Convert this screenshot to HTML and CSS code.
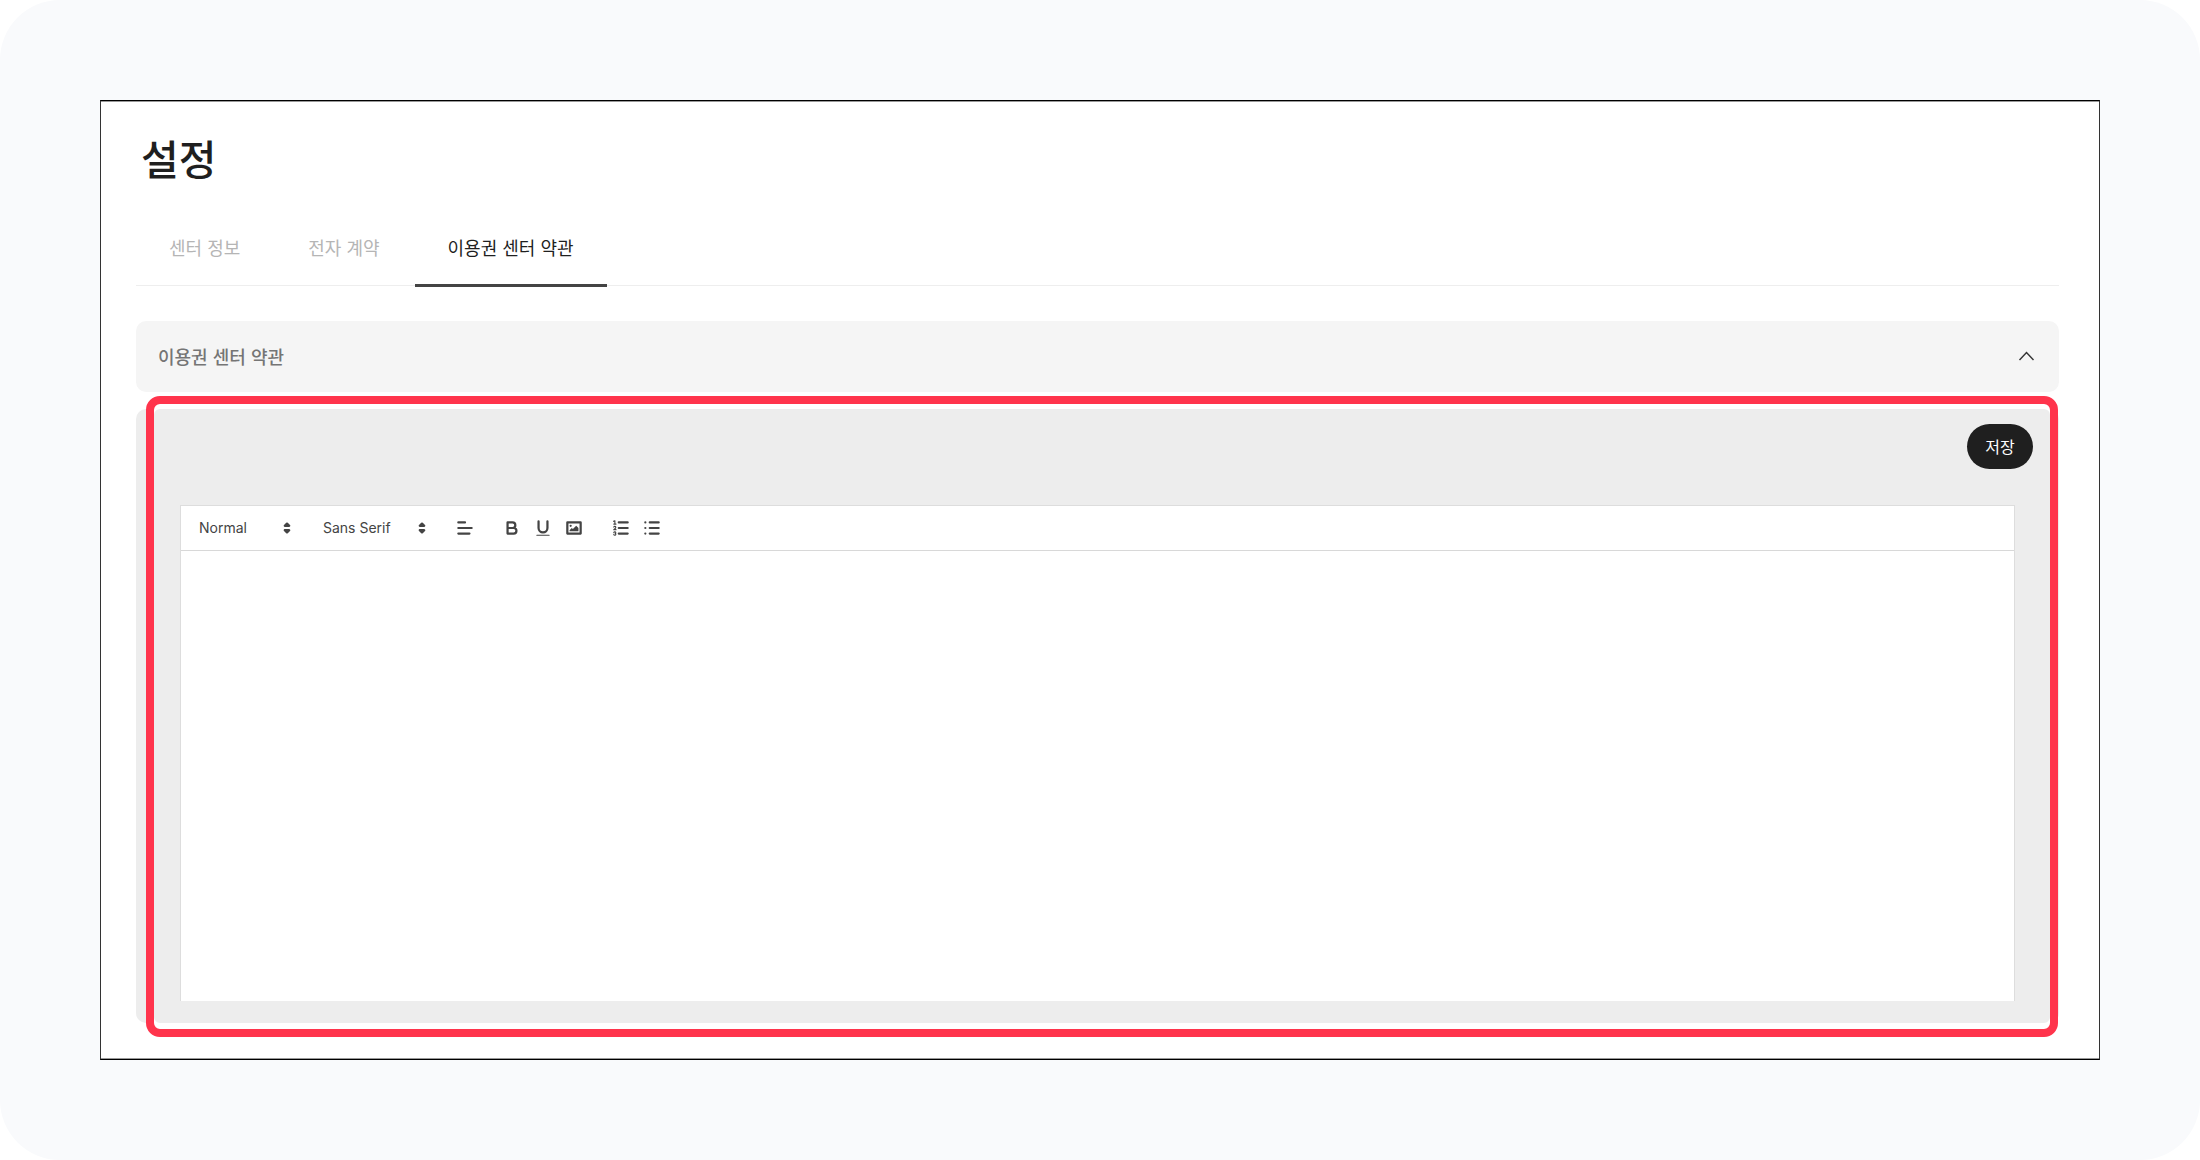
FILE: index.html
```html
<!DOCTYPE html>
<html lang="ko">
<head>
  <meta charset="UTF-8">
  <meta name="viewport" content="width=device-width, initial-scale=1.0">
  <title>설정</title>
  <link rel="stylesheet" href="styles.css">
</head>
<body>
  <div class="stage">
    <main class="window">
      <h1>설정</h1>

      <nav class="tabs">
        <a href="#center" class="tab">센터 정보</a>
        <a href="#contract" class="tab">전자 계약</a>
        <a href="#terms" class="tab active" aria-current="page">이용권 센터 약관</a>
      </nav>

      <button type="button" class="accordion" aria-expanded="true" aria-controls="terms">
        이용권 센터 약관
        <svg class="chevron" viewBox="0 0 16 10"><path d="M1 9L8 1.5L15 9"/></svg>
      </button>

      <section class="panel" id="terms">
        <div class="actions">
          <button type="button" class="save">저장</button>
        </div>

        <div class="editor">
          <div class="toolbar">
            <div class="picker picker-header">
              <select aria-label="Heading">
                <option>Normal</option>
                <option>Heading 1</option>
                <option>Heading 2</option>
              </select>
              <svg class="icon" viewBox="0 0 18 18"><path class="solid" d="M7 11L9 13L11 11ZM7 7L9 5L11 7Z"/></svg>
            </div>
            <div class="picker picker-font">
              <select aria-label="Font">
                <option>Sans Serif</option>
                <option>Serif</option>
                <option>Monospace</option>
              </select>
              <svg class="icon" viewBox="0 0 18 18"><path class="solid" d="M7 11L9 13L11 11ZM7 7L9 5L11 7Z"/></svg>
            </div>
            <div class="group">
              <button type="button" aria-label="Align">
                <svg class="icon" viewBox="0 0 18 18"><path d="M3 9H15M3 14H13M3 4H9"/></svg>
              </button>
            </div>
            <div class="group">
              <button type="button" aria-label="Bold">
                <svg class="icon" viewBox="0 0 18 18"><path d="M5 4H9.5A2.5 2.5 0 0 1 9.5 9H5ZM5 9H10.5A2.5 2.5 0 0 1 10.5 14H5Z"/></svg>
              </button>
              <button type="button" aria-label="Underline">
                <svg class="icon" viewBox="0 0 18 18"><path d="M5 3V9A4 4 0 0 0 13 9V3"/><rect class="fill" x="3" y="15" width="12" height="1" rx="0.5"/></svg>
              </button>
              <button type="button" aria-label="Image">
                <svg class="icon" viewBox="0 0 18 18"><rect x="3" y="4" width="12" height="10"/><circle class="fill" cx="6" cy="7" r="1"/><path class="fill" d="M5 12V11L7 9L8 10L11 7L13 9V12Z"/></svg>
              </button>
            </div>
            <div class="group">
              <button type="button" aria-label="Ordered list">
                <svg class="icon" viewBox="0 0 18 18"><path d="M7 4H15M7 9H15M7 14H15"/><path class="thin" d="M2.5 5.5H4.5M2.3 3L3.5 2.5V5.5M4.5 10.5H2.5C2.5 10.266 4.35 9.424 4.35 8.266A0.959 0.959 0 0 0 2.5 8.156M2.5 14.846A0.959 0.959 0 0 0 4.35 14.737A0.7 0.7 0 0 0 3.75 14A0.688 0.688 0 0 0 4.35 13.264A0.959 0.959 0 0 0 2.5 13.155"/></svg>
              </button>
              <button type="button" aria-label="Bullet list">
                <svg class="icon" viewBox="0 0 18 18"><path d="M7 4H15M7 9H15M7 14H15"/><circle class="fill" cx="3" cy="4" r="1"/><circle class="fill" cx="3" cy="9" r="1"/><circle class="fill" cx="3" cy="14" r="1"/></svg>
              </button>
            </div>
          </div>
          <textarea class="content" aria-label="이용권 센터 약관"></textarea>
        </div>

        <div class="highlight"></div>
      </section>
    </main>
  </div>
</body>
</html>
```
FILE: styles.css
```css
* {
  box-sizing: border-box;
}
body {
  margin: 0;
  background: #fff;
  color: #1f1f1f;
  font-family: "Noto Sans CJK KR", sans-serif;
}
button {
  border: none;
  font-family: inherit;
  cursor: pointer;
}
.stage {
  display: flex;
  min-height: 100vh;
  padding: 100px;
  background: #f9fafc;
  border-radius: 60px;
}
.window {
  flex: 1;
  display: flex;
  flex-direction: column;
  padding: 24px 40px 36px 35px;
  background: #fff;
  border: 1px solid #333;
  border-top-color: #000;
  border-bottom-color: #000;
  box-shadow: inset 0 1px #999, inset 0 -1px #999;
}
h1 {
  margin: 0;
  padding-left: 5px;
  font-size: 41px;
  line-height: 64px;
  font-weight: 500;
}

/* tabs */
.tabs {
  display: flex;
  gap: 2px;
  height: 61px;
  margin: 36px 0 35px;
  border-bottom: 1px solid #eee;
}
.tab {
  height: 62px;
  padding: 0 33px;
  color: #b5b5b5;
  font-size: 18px;
  line-height: 45px;
  text-decoration: none;
}
.tab.active {
  color: #1f1f1f;
  border-bottom: 3px solid #444;
}

/* accordion */
.accordion {
  display: flex;
  align-items: center;
  justify-content: space-between;
  min-height: 71px;
  padding: 0 24px 2px 22px;
  background: #f5f5f5;
  border-radius: 10px;
  color: #757575;
  font-size: 18px;
  font-weight: 500;
}
.chevron {
  width: 17px;
  height: 10px;
  fill: none;
  stroke: #333;
  stroke-width: 1.4;
}
.panel {
  position: relative;
  flex: 1;
  display: flex;
  flex-direction: column;
  gap: 36px;
  margin-top: 17px;
  padding: 15px 26px 22px 44px;
  background: #ededed;
  border-radius: 10px;
}
.actions {
  display: flex;
  justify-content: flex-end;
}
.save {
  min-width: 66px;
  height: 45px;
  padding: 0 18px 2px;
  background: #1f1f1f;
  border-radius: 23px;
  color: #fff;
  font-size: 16px;
}

/* editor */
.editor {
  flex: 1;
  display: flex;
  flex-direction: column;
  margin-right: 18px;
  background: #fff;
  border: 1px solid #ddd;
  border-bottom: none;
}
.toolbar {
  display: flex;
  align-items: center;
  gap: 16px;
  height: 45px;
  padding: 0 9px;
  border-bottom: 1px solid #d8d8d8;
}
.picker {
  position: relative;
}
.picker-header {
  width: 108px;
}
.picker-font {
  width: 119px;
}
.picker select {
  appearance: none;
  display: block;
  width: 100%;
  height: 26px;
  padding: 0 0 2px 9px;
  background: none;
  border: none;
  color: #444;
  font: 14px "Inter", sans-serif;
}
.picker .icon {
  position: absolute;
  top: 3px;
  right: 1px;
  pointer-events: none;
}
.group {
  display: flex;
}
.group button {
  display: flex;
  align-items: center;
  justify-content: center;
  width: 31px;
  height: 26px;
  padding: 0;
  background: none;
}
.icon {
  width: 20px;
  height: 20px;
  fill: none;
  stroke: #444;
  stroke-width: 2;
  stroke-linecap: round;
  stroke-linejoin: round;
}
.icon .fill {
  fill: #444;
  stroke: none;
}
.icon .solid {
  fill: #444;
}
.icon .thin {
  stroke-width: 1;
}
.content {
  flex: 1;
  padding: 14px 18px;
  border: none;
  outline: none;
  resize: none;
  background: none;
  font: 16px "Noto Sans CJK KR", sans-serif;
}

/* red frame over the panel */
.highlight {
  position: absolute;
  inset: -13px 1px -14px 10px;
  border: 8px solid #ff344c;
  border-radius: 14px;
  box-shadow: inset 0 5px #fff, inset 0 -6px #fff;
  pointer-events: none;
}
```
